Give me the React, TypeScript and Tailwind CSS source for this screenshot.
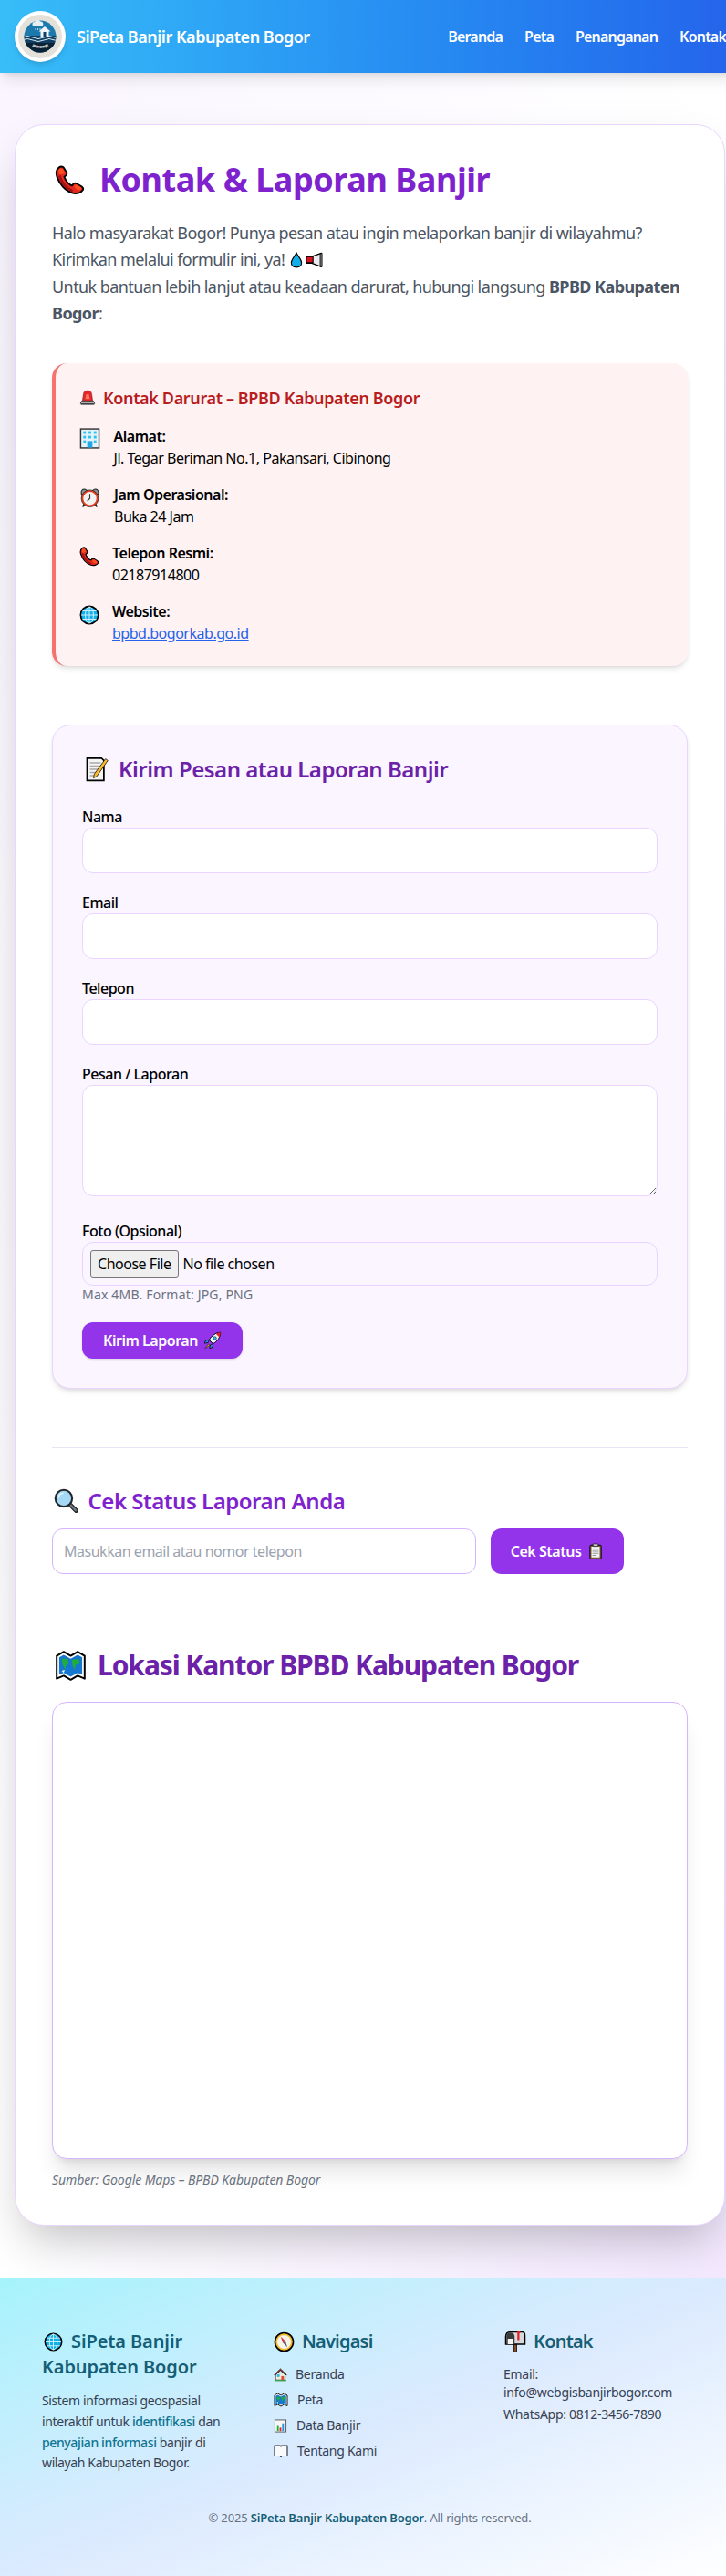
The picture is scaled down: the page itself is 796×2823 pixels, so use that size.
import React from "react";

type P = { s?: number; className?: string };
const Svg = ({ s = 24, className = "", children, vb = "0 0 32 32" }: P & { children: React.ReactNode; vb?: string }) => (
  <svg width={s} height={s} viewBox={vb} className={`inline-block shrink-0 ${className}`} aria-hidden="true">
    {children}
  </svg>
);

const Phone = (p: P) => (
  <Svg {...p}>
    <path d="M4.5 2.5 C2 4.5 1 8 2.5 12.5 C5 20 11 27 18.5 29.5 C23 31 28 29.5 29.8 26.5 C30.6 25 30 23.6 28.8 22.8 L23.5 19.6 C22 18.7 20.4 19 19.4 20.4 L18.4 21.8 C14.6 20.2 11.6 16.4 10.2 12.4 L11.8 11 C13 10 13.2 8.6 12.4 7.2 L9.6 2.6 C8.6 1 6.2 1.1 4.5 2.5 Z" fill="#e0281c" stroke="#000" strokeWidth="1.8" strokeLinejoin="round" />
    <path d="M4.5 4 C6 3 8 3 9 4.5 L11 8 C9 9.5 7 10 5 9.5 C4 8 3.8 5.5 4.5 4 Z M20.5 22 C22 20.5 23.5 20.6 25 21.5 L28 23.5 C28.6 25 28 26 26.5 27 C24 26.6 21.8 25 20.5 22 Z" fill="#ff4d1f" />
    <path d="M5 11 C7 18 12 24 19 27.5" fill="none" stroke="#a30f14" strokeWidth="2.4" />
  </Svg>
);
const Drop = (p: P) => (
  <Svg {...p}>
    <path d="M16 2 C12 10 6 15 6 21 C6 27 10.5 30 16 30 C21.5 30 26 27 26 21 C26 15 20 10 16 2 Z" fill="#10aee8" stroke="#000" strokeWidth="2" />
  </Svg>
);
const Megaphone = (p: P) => (
  <Svg {...p}>
    <path d="M28 5 L12 11 H4 V22 H12 L28 28 Z" fill="#ececf0" stroke="#000" strokeWidth="2" strokeLinejoin="round" />
    <path d="M3 11 H14 V21 H3 Z" fill="#d8121f" stroke="#000" strokeWidth="1.6" />
    <path d="M26 6 L29 5 V28 L26 27 Z" fill="#9a9aa2" stroke="#000" strokeWidth="1.4" />
  </Svg>
);
const Siren = (p: P) => (
  <Svg {...p}>
    <path d="M6 22 L8 8 C8.6 3.5 12 2 16 2 C20 2 23.4 3.5 24 8 L26 22 Z" fill="#e6262c" stroke="#7a2020" strokeWidth="1" />
    <path d="M11.5 18 L13.5 9 H18.5 L20.5 18 Z" fill="#ff7a5a" />
    <path d="M2 27 L4.5 22 H27.5 L30 27 Z" fill="#e0e0e3" stroke="#222" strokeWidth="1.4" strokeLinejoin="round" />
    <path d="M3 27 H29 V29.5 H3 Z" fill="#333" />
  </Svg>
);
const Building = (p: P) => (
  <Svg {...p}>
    <rect x="2" y="1.5" width="28" height="29" fill="#e6f2f7" stroke="#333" strokeWidth="2" />
    <g fill="#2cc3f2">
      <rect x="6" y="5" width="4" height="4" /><rect x="14" y="5" width="4" height="4" /><rect x="22" y="5" width="4" height="4" />
      <rect x="6" y="12" width="4" height="4" /><rect x="14" y="12" width="4" height="4" /><rect x="22" y="12" width="4" height="4" />
      <rect x="6" y="19" width="4" height="4" /><rect x="22" y="19" width="4" height="4" />
      <rect x="12" y="20" width="8" height="10" fill="#1fa6e8" />
    </g>
  </Svg>
);
const Alarm = (p: P) => (
  <Svg {...p}>
    <path d="M3 10 C2 5 5 2 9 3 L12 5 L5 12 Z M29 10 C30 5 27 2 23 3 L20 5 L27 12 Z" fill="#8f8f96" stroke="#222" strokeWidth="1.4" />
    <path d="M8 25 L5 30 M24 25 L27 30" stroke="#222" strokeWidth="2.4" />
    <circle cx="16" cy="17" r="11.5" fill="#f2f2f2" stroke="#e2401f" strokeWidth="3" />
    <circle cx="16" cy="17" r="13" fill="none" stroke="#222" strokeWidth="1" />
    <path d="M16 10 V17 L12 21" fill="none" stroke="#333" strokeWidth="1.6" />
  </Svg>
);
const Globe = (p: P) => (
  <Svg {...p}>
    <circle cx="16" cy="16" r="14" fill="#12b0ea" stroke="#000" strokeWidth="2.4" />
    <g fill="none" stroke="#d6f3fd" strokeWidth="1.4">
      <ellipse cx="16" cy="16" rx="6.5" ry="13" />
      <path d="M16 3 V29 M3 16 H29 M5 9.5 H27 M5 22.5 H27" />
    </g>
  </Svg>
);
const Memo = (p: P) => (
  <Svg {...p}>
    <path d="M4 2 H22 L25 5 V30 H4 Z" fill="#f4f4f4" stroke="#000" strokeWidth="2" />
    <path d="M7.5 8 H21 M7.5 12 H21 M7.5 16 H19 M7.5 20 H15 M7.5 24 H13" stroke="#a8a8a8" strokeWidth="1.6" />
    <path d="M27 3 L30 5 L16 25 L12 27 L13 22 Z" fill="#fbb92c" stroke="#222" strokeWidth="1" />
  </Svg>
);
const Rocket = (p: P) => (
  <Svg {...p}>
    <path d="M30 2 C22 2 14 8 10 15 L17 22 C24 18 30 10 30 2 Z" fill="#e8f2f8" stroke="#000" strokeWidth="1.6" strokeLinejoin="round" />
    <path d="M30 2 C27 2 24 3 22 4.5 L27.5 10 C29 8 30 5 30 2 Z" fill="#e0202a" />
    <circle cx="20" cy="12" r="2.8" fill="#35b6ee" stroke="#222" strokeWidth="1" />
    <path d="M10 15 L4 16 L2 21 L8 20 Z M17 22 L16 28 L11 30 L12 24 Z" fill="#2f8fe0" stroke="#000" strokeWidth="1.2" />
    <path d="M9 22 L3 30 L11 25 Z" fill="#f7931a" stroke="#222" strokeWidth="1" />
  </Svg>
);
const Magnifier = (p: P) => (
  <Svg {...p}>
    <path d="M19 19 L28 28" stroke="#222" strokeWidth="5.5" strokeLinecap="round" />
    <path d="M19.5 19.5 L27.5 27.5" stroke="#6b7680" strokeWidth="3" strokeLinecap="round" />
    <circle cx="12.5" cy="12.5" r="10.5" fill="#a5d8f5" stroke="#22262a" strokeWidth="2.4" />
    <path d="M6 12 C6 8 9 6 12 6" fill="none" stroke="#e4f5ff" strokeWidth="2" />
  </Svg>
);
const MapIcon = (p: P) => (
  <Svg {...p}>
    <path d="M2 6 L9 2 L16 6 L23 2 L30 6 V29 L23 26 L16 30 L9 26 L2 29 Z" fill="#fff" stroke="#000" strokeWidth="1.8" strokeLinejoin="round" />
    <path d="M4.5 7.5 L9 5 L16 9 L23 5 L27.5 7.5 V25 L23 23 L16 27 L9 23 L4.5 25 Z" fill="#1577cf" />
    <path d="M7 9 L13 9 L14 14 L11 16 L11 20 L8 15 Z M17 10 L24 9 L25 14 L21 15 L20 20 L18 16 Z" fill="#1fae3c" />
    <path d="M7 21 L10 20 L9 23 Z" fill="#fff" />
  </Svg>
);
const Clipboard = (p: P) => (
  <Svg {...p}>
    <rect x="5" y="4" width="22" height="27" rx="2" fill="#7a5a3c" stroke="#000" strokeWidth="1.6" />
    <rect x="8" y="7" width="16" height="21" fill="#f4f4f4" />
    <path d="M10 12 H22 M10 16 H22 M10 20 H22 M10 24 H18" stroke="#888" strokeWidth="1.6" />
    <rect x="11" y="1.5" width="10" height="5" rx="1" fill="#c8c8cc" stroke="#000" strokeWidth="1.2" />
  </Svg>
);
const Compass = (p: P) => (
  <Svg {...p}>
    <circle cx="16" cy="16" r="14" fill="#f9b82a" stroke="#000" strokeWidth="2.2" />
    <circle cx="16" cy="16" r="10.5" fill="#f7f4ec" />
    <path d="M11 8 L18 15 L14 17 Z" fill="#e0202a" />
    <path d="M21 24 L14 17 L18 15 Z" fill="#555" />
  </Svg>
);
const Mailbox = (p: P) => (
  <Svg {...p}>
    <path d="M14 19 H18 V31 H14 Z" fill="#8a4b1e" stroke="#000" strokeWidth="1" />
    <path d="M2 20 V9 C2 4 5 2 9 2 H26 C29 2 30 4 30 7 V20 Z" fill="#d8d8da" stroke="#000" strokeWidth="2" />
    <path d="M3 20 V9 C3 5 5.5 3 9 3 C12.5 3 15 5 15 9 V20 Z" fill="#3a3a3a" />
    <path d="M5 12 H13 V20 H5 Z" fill="#f4f4f4" />
    <path d="M19 1 H23 V4 H22 V14 H19 Z" fill="#e0202a" />
  </Svg>
);
const House = (p: P) => (
  <Svg {...p}>
    <path d="M5 14 V28 H27 V14" fill="#f2ead8" stroke="#333" strokeWidth="1.4" />
    <path d="M1.5 16 L16 2 L30.5 16 L27 16 L16 6 L5 16 Z" fill="#a83a2a" stroke="#000" strokeWidth="1.4" strokeLinejoin="round" />
    <rect x="8" y="15" width="6" height="6" fill="#28b6ee" />
    <rect x="18" y="19" width="6" height="9" fill="#d94a30" />
    <path d="M2 29.5 H30" stroke="#1e9e36" strokeWidth="2.4" />
  </Svg>
);
const Chart = (p: P) => (
  <Svg {...p}>
    <rect x="3" y="2" width="26" height="28" fill="#f8f8f8" stroke="#555" strokeWidth="2" />
    <rect x="8" y="16" width="4" height="12" fill="#1fae3c" />
    <rect x="14" y="20" width="4" height="8" fill="#e0202a" />
    <rect x="20" y="10" width="4" height="18" fill="#1f8fe0" />
  </Svg>
);
const Book = (p: P) => (
  <Svg {...p}>
    <path d="M2 4 H14 L16 6 L18 4 H30 V27 H18 L16 29 L14 27 H2 Z" fill="#f8fafc" stroke="#222c3a" strokeWidth="2.2" strokeLinejoin="round" />
  </Svg>
);

const Logo = () => (
  <div className="w-14 h-14 shrink-0 rounded-full bg-white shadow-md flex items-center justify-center">
    <svg width="48" height="48" viewBox="0 0 48 48" aria-hidden="true">
      <circle cx="24" cy="24" r="24" fill="#e4e1da" />
      <circle cx="24" cy="24" r="17.5" fill="#1b79ad" />
      <clipPath id="lc"><circle cx="24" cy="24" r="17.5" /></clipPath>
      <g clipPath="url(#lc)">
        <rect x="4" y="23" width="40" height="20" fill="#0f3f63" />
        <path d="M4 25 Q10 22 16 25 T28 25 T40 25 T52 25" fill="none" stroke="#d8ecf4" strokeWidth="1" />
        <path d="M4 28 Q10 25 16 28 T28 28 T40 28 T52 28" fill="none" stroke="#d8ecf4" strokeWidth="1" />
        <rect x="4" y="31" width="40" height="12" fill="#0a2233" />
      </g>
      <path d="M17 13 a2.6 2.6 0 0 1 1 -5 a3.4 3.4 0 0 1 6.2 -0.5 a2.8 2.8 0 0 1 1 5.5 Z" fill="#e4f0f5" />
      <path d="M19 15 V17 M21.5 15 V17 M24 15 V17" stroke="#e4f0f5" strokeWidth="0.8" />
      <path d="M22.5 18.5 L29 13 L35.5 18.5 H33.5 V24 H24.5 V18.5 Z" fill="#f1f5f7" />
      <path d="M27.5 19 H30.5 V24 H27.5 Z" fill="#0f3f63" />
      <path id="lt" d="M10.5 31.5 Q24 42 37.5 31.5" fill="none" />
      <text fontSize="3.5" fontWeight="700" fill="#f3f3f3" fontFamily="'Noto Sans',sans-serif" textAnchor="middle">
        <textPath href="#lt" startOffset="50%">SIPETA BANJIR</textPath>
      </text>
    </svg>
  </div>
);

const inputCls = "block w-full h-[50px] rounded-xl border border-[#e9d5ff] bg-white px-3 outline-none";

const Field = ({ label }: { label: string }) => (
  <div>
    <label className="block font-medium text-black leading-6">{label}</label>
    <input type="text" className={inputCls} />
  </div>
);

const Contact = ({ icon, label, children, gap }: { icon: React.ReactNode; label: string; children: React.ReactNode; gap: string }) => (
  <li className={`flex items-start ${gap}`}>
    {icon}
    <div className="leading-6">
      <div className="font-semibold text-black">{label}</div>
      <div className="text-black">{children}</div>
    </div>
  </li>
);

const NavItem = ({ icon, label, gap }: { icon: React.ReactNode; label: string; gap: string }) => (
  <li className={`flex items-center h-5 ${gap}`}>
    {icon}
    <span>{label}</span>
  </li>
);

export default function App() {
  return (
    <div className="w-[796px] h-[2823px] overflow-hidden font-['Noto_Sans',sans-serif] text-[#111827]">
      <div className="w-[811px] tracking-[-0.03em]">
        <header className="h-20 flex items-center justify-between pl-4 pr-[15px] bg-gradient-to-r from-[#38bdf8] to-[#2563eb] shadow-lg relative">
          <div className="flex items-center gap-3">
            <Logo />
            <span className="text-white text-lg font-semibold">SiPeta Banjir Kabupaten Bogor</span>
          </div>
          <nav className="flex gap-6 text-white font-semibold tracking-[-0.05em]">
            <span>Beranda</span>
            <span>Peta</span>
            <span>Penanganan</span>
            <span>Kontak</span>
          </nav>
        </header>

        <main className="bg-gradient-to-br from-[#faf5ff] via-white to-[#f3e8ff] pt-14 pb-[57px] px-4">
          <section className="bg-white rounded-[32px] border border-[#e9d5ff] shadow-2xl p-10 pb-[39px]">
            <h1 className="flex items-center gap-[16px] text-4xl font-bold text-[#7e22ce] h-10 mb-6 tracking-[-0.012em]">
              <Phone s={33} className="ml-[3px]" />
              Kontak &amp; Laporan Banjir
            </h1>
            <p className="text-lg leading-[29.25px] text-[#4b5563] mb-10 tracking-[-0.032em]">
              Halo masyarakat Bogor! Punya pesan atau ingin melaporkan banjir di wilayahmu?
              <br />
              Kirimkan melalui formulir ini, ya! <Drop s={18} className="align-[-3px]" /><Megaphone s={21} className="align-[-4px]" />
              <br />
              Untuk bantuan lebih lanjut atau keadaan darurat, hubungi langsung <strong className="font-bold">BPBD Kabupaten Bogor</strong>:
            </p>

            <div className="bg-[#fef2f2] border-l-4 border-[#f87171] rounded-2xl shadow-md p-6 mb-16">
              <h2 className="flex items-center gap-2 text-lg leading-7 font-semibold text-[#b91c1c] mb-4 tracking-[-0.02em]">
                <Siren s={18} className="ml-0.5" />
                Kontak Darurat – BPBD Kabupaten Bogor
              </h2>
              <ul className="flex flex-col gap-4 pl-0.5">
                <Contact gap="gap-[14.5px]" icon={<Building s={23} className="mt-[3px]" />} label="Alamat:">Jl. Tegar Beriman No.1, Pakansari, Cibinong</Contact>
                <Contact gap="gap-[15px]" icon={<Alarm s={23} className="mt-[4px]" />} label="Jam Operasional:">Buka 24 Jam</Contact>
                <Contact gap="gap-[14px]" icon={<Phone s={22} className="mt-[5px]" />} label="Telepon Resmi:">02187914800</Contact>
                <Contact gap="gap-[14px]" icon={<Globe s={22} className="mt-[5px]" />} label="Website:">
                  <span className="text-[#2563eb] underline">bpbd.bogorkab.go.id</span>
                </Contact>
              </ul>
            </div>

            <div className="bg-[#faf5ff] border border-[#e9d5ff] rounded-[20px] shadow-md p-8">
              <h2 className="flex items-center gap-2.5 text-2xl font-semibold text-[#6b21a8] h-8 mb-6">
                <Memo s={28} className="ml-0.5" />
                Kirim Pesan atau Laporan Banjir
              </h2>
              <form className="flex flex-col gap-5">
                <Field label="Nama" />
                <Field label="Email" />
                <Field label="Telepon" />
                <div>
                  <label className="block font-medium text-black leading-6">Pesan / Laporan</label>
                  <textarea className="block w-full h-[122px] rounded-xl border border-[#e9d5ff] bg-white px-3 mb-[6px] outline-none" />
                </div>
                <div>
                  <label className="block font-medium text-black leading-6">Foto (Opsional)</label>
                  <input type="file" className="block w-full h-12 rounded-xl border border-[#e9d5ff] p-2 text-black file:h-[30px] file:px-[7px] file:mr-[5px] file:bg-[#efefef] file:border file:border-solid file:border-[#767676] file:rounded-[3px] file:text-black" />
                  <p className="text-sm leading-5 text-[#6b7280] tracking-[0.013em]">Max 4MB. Format: JPG, PNG</p>
                </div>
                <button type="button" className="self-start h-10 w-44 rounded-xl bg-[#9333ea] text-white font-semibold flex items-center justify-center gap-1.5 shadow-sm">
                  Kirim Laporan <Rocket s={20} />
                </button>
              </form>
            </div>

            <hr className="mt-16 mb-0 border-t border-[#e9e3f5]" />

            <h3 className="flex items-center gap-[9.5px] text-2xl font-semibold text-[#7e22ce] h-8 mt-[42px] mb-3.5 tracking-[-0.02em]">
              <Magnifier s={28} className="ml-0.5" />
              Cek Status Laporan Anda
            </h3>
            <div className="flex gap-4">
              <input type="text" placeholder="Masukkan email atau nomor telepon" className="w-[465px] h-[50px] rounded-xl border border-[#d8b4fe] px-3 outline-none placeholder:text-[#9ca3af]" />
              <button type="button" className="w-[146px] h-[50px] rounded-xl bg-[#9333ea] text-white font-semibold flex items-center justify-center gap-[7px]">
                Cek Status <Clipboard s={18} />
              </button>
            </div>

            <h2 className="flex items-center gap-[12px] text-3xl font-bold text-[#6b21a8] h-9 mt-[82px] mb-[22px] tracking-[-0.036em]">
              <MapIcon s={35} className="ml-[3px]" />
              Lokasi Kantor BPBD Kabupaten Bogor
            </h2>
            <div className="h-[501px] rounded-2xl border border-[#d8b4fe] bg-white shadow-xl" />
            <p className="mt-[13px] text-sm italic leading-5 text-[#6b7280] tracking-[-0.006em]">Sumber: Google Maps – BPBD Kabupaten Bogor</p>
          </section>
        </main>

        <footer className="h-[327px] bg-gradient-to-br from-[#a5f3fc] via-[#dbeafe] to-white px-[46px] pt-14 text-sm text-[#374151] tracking-[-0.02em]">
          <div className="grid grid-cols-3 gap-10">
            <div>
              <h4 className="text-xl leading-7 font-semibold text-[#155e75] mb-3 tracking-[-0.005em]">
                <Globe s={21} className="align-[-4px] ml-0.5 mr-[9px]" />
                SiPeta Banjir Kabupaten Bogor
              </h4>
              <p className="leading-[22.75px] tracking-[-0.027em]">
                Sistem informasi geospasial interaktif untuk <span className="font-medium text-[#0e7490]">identifikasi</span> dan <span className="font-medium text-[#0e7490]">penyajian informasi</span> banjir di wilayah Kabupaten Bogor.
              </p>
            </div>
            <div>
              <h4 className="flex items-center gap-2 text-xl leading-7 font-semibold text-[#155e75] mb-3 tracking-[-0.04em]">
                <Compass s={23} className="ml-px" />
                Navigasi
              </h4>
              <ul className="flex flex-col gap-2">
                <NavItem icon={<House s={15} className="ml-px" />} label="Beranda" gap="gap-[9px]" />
                <NavItem icon={<MapIcon s={16} className="ml-px" />} label="Peta" gap="gap-2.5" />
                <NavItem icon={<Chart s={15} className="ml-px" />} label="Data Banjir" gap="gap-2.5" />
                <NavItem icon={<Book s={16} className="ml-px" />} label="Tentang Kami" gap="gap-2.5" />
              </ul>
            </div>
            <div>
              <h4 className="flex items-center gap-2 text-xl leading-7 font-semibold text-[#155e75] mb-3 tracking-[-0.04em]">
                <Mailbox s={24} className="ml-px" />
                Kontak
              </h4>
              <div className="flex flex-col gap-1">
                <p className="w-[200px] break-words">Email: info@webgisbanjirbogor.com</p>
                <p>WhatsApp: 0812-3456-7890</p>
              </div>
            </div>
          </div>
          <p className="mt-10 text-center text-[13px] leading-4 text-[#6b7280] tracking-[-0.012em]">
            © 2025 <span className="font-semibold text-[#155e75]">SiPeta Banjir Kabupaten Bogor</span>. All rights reserved.
          </p>
        </footer>
      </div>
    </div>
  );
}
